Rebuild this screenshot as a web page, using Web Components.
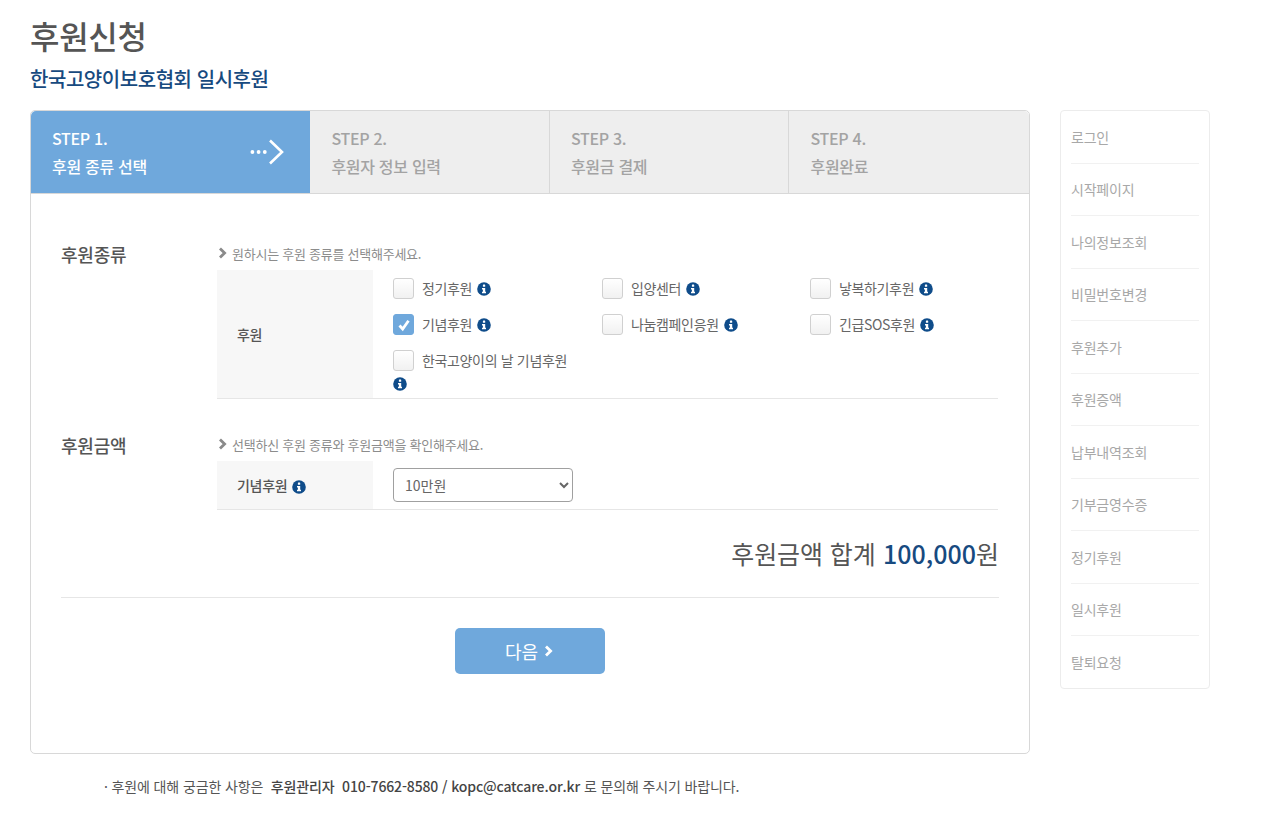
<!DOCTYPE html>
<html lang="ko">
<head>
<meta charset="utf-8">
<title>후원신청</title>
<style>
  html, body { margin: 0; background: #fff; }
  body { font-family: "Noto Sans CJK KR", "Noto Sans", sans-serif; color: #555; }
</style>
</head>
<body>
<donate-page>
  <step-bar slot="steps">
    <step-item active step="STEP 1." label="후원 종류 선택" style="width:280px"></step-item>
    <step-item step="STEP 2." label="후원자 정보 입력"></step-item>
    <step-item step="STEP 3." label="후원금 결제"></step-item>
    <step-item step="STEP 4." label="후원완료" last></step-item>
  </step-bar>

  <form-section slot="form" title="후원종류" hint="원하시는 후원 종류를 선택해주세요.">
    <form-row label="후원" style="height:129px">
      <check-grid>
        <check-item label="정기후원"></check-item>
        <check-item label="입양센터"></check-item>
        <check-item label="낳복하기후원"></check-item>
        <check-item label="기념후원" checked></check-item>
        <check-item label="나눔캠페인응원"></check-item>
        <check-item label="긴급SOS후원"></check-item>
        <check-item label="한국고양이의 날 기념후원" wrap></check-item>
      </check-grid>
    </form-row>
  </form-section>

  <form-section slot="form" title="후원금액" hint="선택하신 후원 종류와 후원금액을 확인해주세요." style="margin-top:28px">
    <form-row label="기념후원" info style="height:49px">
      <amount-select></amount-select>
    </form-row>
  </form-section>

  <side-nav slot="side">
    <a>로그인</a><a>시작페이지</a><a>나의정보조회</a><a>비밀번호변경</a><a>후원추가</a><a>후원증액</a>
    <a>납부내역조회</a><a>기부금영수증</a><a>정기후원</a><a>일시후원</a><a>탈퇴요청</a>
  </side-nav>
</donate-page>

<script>
const FONT = '"Noto Sans CJK KR", "Noto Sans", sans-serif';

class InfoIcon extends HTMLElement {
  constructor() {
    super();
    this.attachShadow({ mode: 'open' });
    this.shadowRoot.innerHTML = `
      <style>
        :host { display: inline-block; width: 14px; height: 14px; line-height: 0; }
        svg { width: 14px; height: 14px; }
      </style>
      <svg viewBox="0 0 14 14">
        <circle cx="7" cy="7" r="6.8" fill="#0f4c8a"/>
        <rect x="5.9" y="2.6" width="2.3" height="2.2" rx=".4" fill="#fff"/>
        <path d="M5 6h3.2v3.7H9v1.5H5V9.7h.9V7.5H5z" fill="#fff"/>
      </svg>`;
  }
}
customElements.define('info-icon', InfoIcon);

class ChevronMark extends HTMLElement {
  constructor() {
    super();
    this.attachShadow({ mode: 'open' });
    const color = this.getAttribute('color') || '#8a8a8a';
    this.shadowRoot.innerHTML = `
      <style>
        :host { display: inline-block; width: 10px; height: 12px; line-height: 0; }
        svg { width: 10px; height: 12px; }
      </style>
      <svg viewBox="0 0 10 12"><path d="M2 1.5 6.6 6 2 10.5" fill="none" stroke="${color}" stroke-width="2.8"/></svg>`;
  }
}
customElements.define('chevron-mark', ChevronMark);

class StepItem extends HTMLElement {
  constructor() {
    super();
    this.attachShadow({ mode: 'open' });
  }
  connectedCallback() {
    const active = this.hasAttribute('active');
    this.shadowRoot.innerHTML = `
      <style>
        :host {
          display: flex; box-sizing: border-box; width: 240px; height: 82px;
          align-items: center; justify-content: space-between;
          padding: 0 26px 0 21px;
          background: ${active ? '#6fa8dc' : '#eeeeee'};
          color: ${active ? '#fff' : '#a3a3a3'};
          border-right: ${active || this.hasAttribute('last') ? '0' : '1px solid #d8d8d8'};
          font-weight: 500; font-size: 16px;
        }
        .txt { line-height: 28px; letter-spacing: -.3px; }
        .txt div { white-space: nowrap; }
        svg { width: 34px; height: 28px; }
      </style>
      <div class="txt"><div>${this.getAttribute('step')}</div><div>${this.getAttribute('label')}</div></div>
      ${active ? `<svg viewBox="0 0 34 28">
        <g fill="#fff"><circle cx="2.4" cy="14" r="1.9"/><circle cx="8.6" cy="14" r="1.9"/><circle cx="14.8" cy="14" r="1.9"/></g>
        <path d="M20 2.5 32 14 20 25.500" fill="none" stroke="#fff" stroke-width="2.600"/>
      </svg>` : ''}`;
  }
}
customElements.define('step-item', StepItem);

class StepBar extends HTMLElement {
  constructor() {
    super();
    this.attachShadow({ mode: 'open' });
    this.shadowRoot.innerHTML = `
      <style>
        :host { display: flex; border-bottom: 1px solid #d8d8d8; border-radius: 5px 5px 0 0; overflow: hidden; }
      </style>
      <slot></slot>`;
  }
}
customElements.define('step-bar', StepBar);

class FormSection extends HTMLElement {
  constructor() {
    super();
    this.attachShadow({ mode: 'open' });
  }
  connectedCallback() {
    this.shadowRoot.innerHTML = `
      <style>
        :host { display: flex; }
        h3 { margin: 0; width: 156px; flex: none; font-size: 18px; font-weight: 500; color: #555; line-height: 26px; padding-top: 5px; letter-spacing: -.2px; }
        .body { width: 781px; }
        .hint { height: 34px; display: flex; align-items: center; gap: 4px; font-size: 13px; color: #8c8c8c; padding-left: 1px; letter-spacing: -.25px; }
      </style>
      <h3>${this.getAttribute('title')}</h3>
      <div class="body">
        <div class="hint"><chevron-mark></chevron-mark><span>${this.getAttribute('hint')}</span></div>
        <slot></slot>
      </div>`;
    this.removeAttribute('title');
  }
}
customElements.define('form-section', FormSection);

class FormRow extends HTMLElement {
  constructor() {
    super();
    this.attachShadow({ mode: 'open' });
  }
  connectedCallback() {
    const info = this.hasAttribute('info') ? ' <info-icon></info-icon>' : '';
    this.shadowRoot.innerHTML = `
      <style>
        :host { display: flex; box-sizing: border-box; border-bottom: 1px solid #e6e6e6; }
        .th {
          width: 156px; flex: none; box-sizing: border-box; padding-left: 20px;
          background: #f7f7f7; display: flex; align-items: center; gap: 5px;
          font-size: 14px; font-weight: 500; color: #555; letter-spacing: -.3px;
        }
        info-icon { margin-top: 4px; }
        .td { flex: 1; padding-left: 20px; display: flex; align-items: center; }
      </style>
      <div class="th"><span>${this.getAttribute('label')}</span>${info}</div>
      <div class="td"><slot></slot></div>`;
  }
}
customElements.define('form-row', FormRow);

class CheckGrid extends HTMLElement {
  constructor() {
    super();
    this.attachShadow({ mode: 'open' });
    this.shadowRoot.innerHTML = `
      <style>
        :host { display: grid; grid-template-columns: 209px 208px 188px; row-gap: 15px; align-self: flex-start; padding-top: 8px; }
      </style>
      <slot></slot>`;
  }
}
customElements.define('check-grid', CheckGrid);

class CheckItem extends HTMLElement {
  constructor() {
    super();
    this.attachShadow({ mode: 'open' });
  }
  connectedCallback() {
    const checked = this.hasAttribute('checked');
    const wrap = this.hasAttribute('wrap');
    this.shadowRoot.innerHTML = `
      <style>
        :host { display: block; font-size: 14px; color: #666; letter-spacing: -.35px; }
        .line { display: flex; align-items: center; height: 21px; white-space: nowrap; }
        .box {
          width: 21px; height: 21px; box-sizing: border-box; flex: none; margin-right: 8px;
          border-radius: 3px; border: 1px solid ${checked ? '#6fa8dc' : '#d0d0d0'};
          background: ${checked ? '#6fa8dc' : 'linear-gradient(#fff, #f1f1f1)'};
          display: flex; align-items: center; justify-content: center;
        }
        .box svg { width: 14px; height: 14px; }
        span { position: relative; top: -1px; }
        info-icon { margin-left: 5px; margin-top: 1px; }
        .below { display: block; height: 14px; margin-top: 6px; line-height: 0; }
        .below info-icon { margin: 0; }
      </style>
      <div class="line">
        <div class="box">${checked ? '<svg viewBox="0 0 14 14"><path d="M2.5 7.500 5.700 11 11.500 2.800" fill="none" stroke="#fff" stroke-width="2.800"/></svg>' : ''}</div>
        <span>${this.getAttribute('label')}</span>
        ${wrap ? '' : '<info-icon></info-icon>'}
      </div>
      ${wrap ? '<div class="below"><info-icon></info-icon></div>' : ''}`;
  }
}
customElements.define('check-item', CheckItem);

class AmountSelect extends HTMLElement {
  constructor() {
    super();
    this.attachShadow({ mode: 'open' });
    this.shadowRoot.innerHTML = `
      <style>
        :host { display: block; }
        select {
          display: block; width: 180px; height: 34px; box-sizing: border-box;
          padding: 0 7px; border: 1px solid #a0a0a0; border-radius: 4px; background: #fff;
          font: 14px ${FONT}; color: #666;
        }
      </style>
      <select><option>10만원</option></select>`;
  }
}
customElements.define('amount-select', AmountSelect);

class SideNav extends HTMLElement {
  constructor() {
    super();
    this.attachShadow({ mode: 'open' });
    this.shadowRoot.innerHTML = `
      <style>
        :host {
          display: block; box-sizing: border-box; width: 150px; height: 579px;
          border: 1px solid #ececec; border-radius: 4px; padding: 0 10px;
        }
        ::slotted(a) {
          display: flex; align-items: center; height: 52.5px; box-sizing: border-box;
          border-bottom: 1px solid #f1f1f1; font-size: 14px; color: #a8a8a8; letter-spacing: -.2px;
        }
        ::slotted(a:last-child) { border-bottom: 0; }
      </style>
      <slot></slot>`;
  }
}
customElements.define('side-nav', SideNav);

class DonatePage extends HTMLElement {
  constructor() {
    super();
    this.attachShadow({ mode: 'open' });
    this.shadowRoot.innerHTML = `
      <style>
        :host { display: block; box-sizing: border-box; width: 1283px; height: 818px; padding: 0 0 0 30px; overflow: hidden; font-family: ${FONT}; }
        h1 { margin: 0; height: 67px; font-size: 32px; font-weight: 500; color: #555; line-height: 70px; letter-spacing: -.3px; }
        h2 { margin: 0; height: 43px; font-size: 20px; font-weight: 500; color: #174a80; line-height: 24px; letter-spacing: -.45px; }
        .cols { display: flex; gap: 30px; align-items: flex-start; }
        .card { width: 1000px; height: 644px; box-sizing: border-box; border: 1px solid #d8d8d8; border-radius: 5px; }
        .content { padding: 42px 31px 0 30px; }
        .total {
          display: flex; justify-content: flex-end; align-items: center; height: 88px; width: 938px; box-sizing: border-box;
          border-bottom: 1px solid #e6e6e6; padding-bottom: 1px;
          font-size: 25px; color: #555; letter-spacing: -.1px;
        }
        .total b { font-weight: 500; color: #174a80; margin-left: .3em; letter-spacing: 0; }
        .actions { display: flex; justify-content: center; padding-top: 30px; }
        button {
          width: 150px; height: 46px; border: 0; border-radius: 5px; background: #6fa8dc; color: #fff;
          font: 18px ${FONT}; display: flex; align-items: center; justify-content: center; gap: 6px;
        }
        p { margin: 22px 0 0 74px; font-size: 14px; color: #555; letter-spacing: -.13px; white-space: pre; }
        p b { font-weight: 500; color: #444; }
      </style>
      <h1>후원신청</h1>
      <h2>한국고양이보호협회 일시후원</h2>
      <div class="cols">
        <div>
          <div class="card">
            <slot name="steps"></slot>
            <div class="content">
              <slot name="form"></slot>
              <div class="total"><span>후원금액 합계<b>100,000</b>원</span></div>
              <div class="actions"><button type="button">다음 <chevron-mark color="#ffffff"></chevron-mark></button></div>
            </div>
          </div>
          <p>· 후원에 대해 궁금한 사항은  <b>후원관리자  010-7662-8580 / kopc@catcare.or.kr</b> 로 문의해 주시기 바랍니다.</p>
        </div>
        <slot name="side"></slot>
      </div>`;
  }
}
customElements.define('donate-page', DonatePage);
</script>
</body>
</html>
